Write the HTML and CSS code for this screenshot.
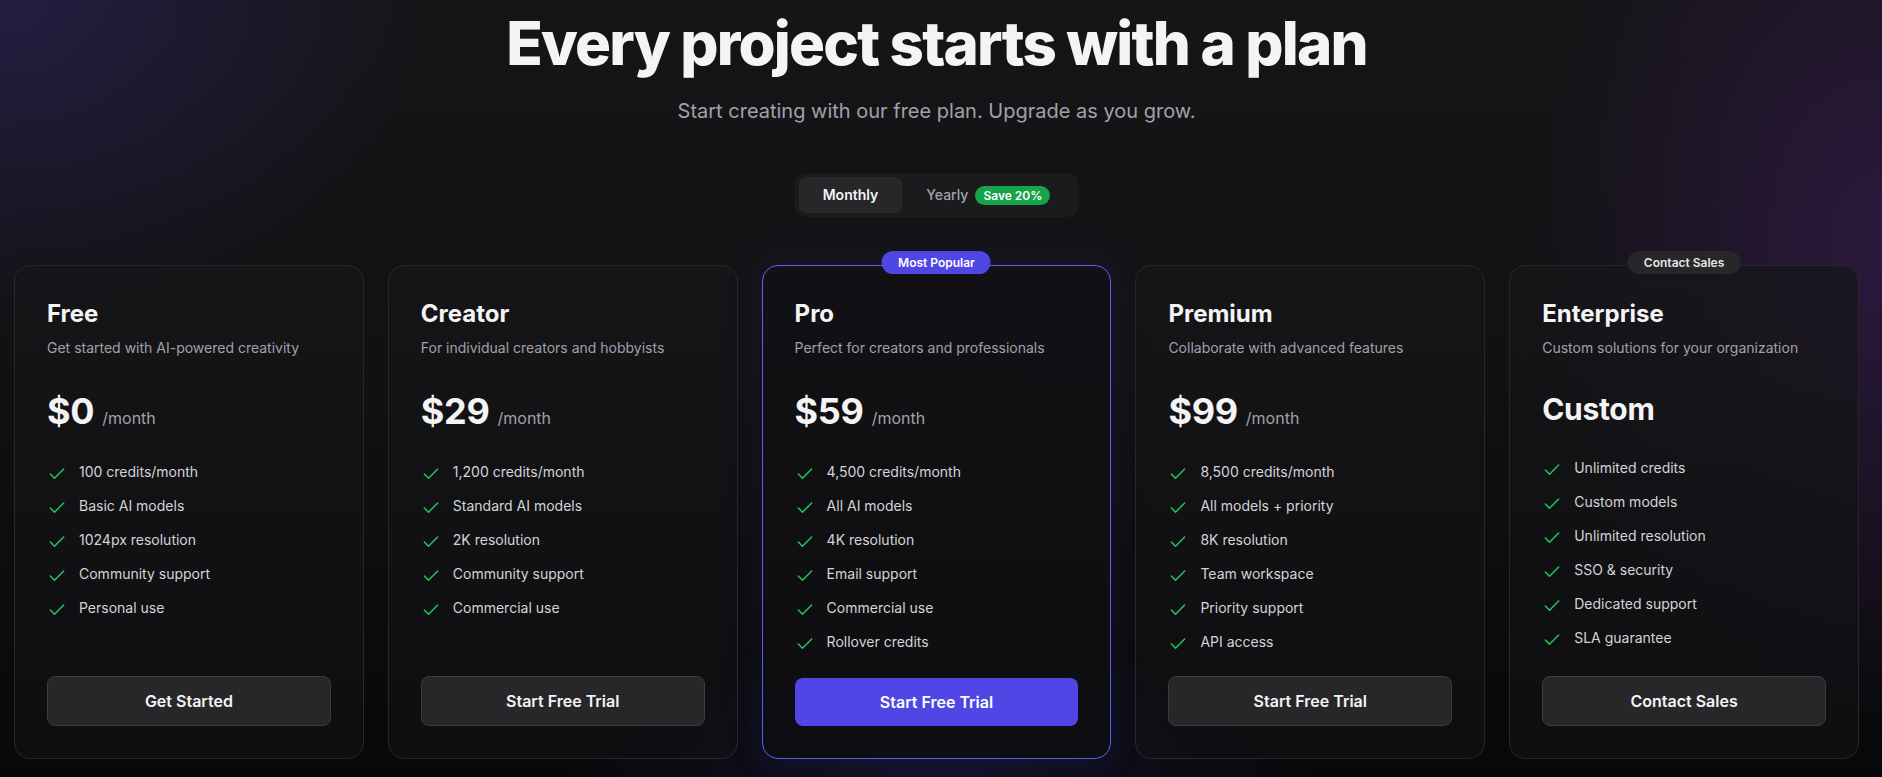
FILE: index.html
```html
<!DOCTYPE html>
<html lang="en">
<head>
<meta charset="utf-8">
<title>Pricing</title>
<link rel="stylesheet" href="styles.css">
</head>
<body>
<div class="page">
  <header class="hero">
    <h1 class="hero-title">Every project starts with a plan</h1>
    <p class="hero-sub">Start creating with our free plan. Upgrade as you grow.</p>
    <div class="toggle">
      <button class="toggle-btn is-active">Monthly</button>
      <button class="toggle-btn">Yearly <span class="save">Save 20%</span></button>
    </div>
  </header>

  <section class="plans">
    <article class="plan">
      <h3 class="plan-name">Free</h3>
      <p class="plan-desc">Get started with AI-powered creativity</p>
      <div class="price"><span class="amount">$0</span><span class="per">/month</span></div>
      <ul class="features">
        <li><svg class="check" viewBox="0 0 24 24"><path d="M20 6 9 17l-5-5"/></svg>100 credits/month</li>
        <li><svg class="check" viewBox="0 0 24 24"><path d="M20 6 9 17l-5-5"/></svg>Basic AI models</li>
        <li><svg class="check" viewBox="0 0 24 24"><path d="M20 6 9 17l-5-5"/></svg>1024px resolution</li>
        <li><svg class="check" viewBox="0 0 24 24"><path d="M20 6 9 17l-5-5"/></svg>Community support</li>
        <li><svg class="check" viewBox="0 0 24 24"><path d="M20 6 9 17l-5-5"/></svg>Personal use</li>
      </ul>
      <button class="plan-btn">Get Started</button>
    </article>

    <article class="plan">
      <h3 class="plan-name">Creator</h3>
      <p class="plan-desc">For individual creators and hobbyists</p>
      <div class="price"><span class="amount">$29</span><span class="per">/month</span></div>
      <ul class="features">
        <li><svg class="check" viewBox="0 0 24 24"><path d="M20 6 9 17l-5-5"/></svg>1,200 credits/month</li>
        <li><svg class="check" viewBox="0 0 24 24"><path d="M20 6 9 17l-5-5"/></svg>Standard AI models</li>
        <li><svg class="check" viewBox="0 0 24 24"><path d="M20 6 9 17l-5-5"/></svg>2K resolution</li>
        <li><svg class="check" viewBox="0 0 24 24"><path d="M20 6 9 17l-5-5"/></svg>Community support</li>
        <li><svg class="check" viewBox="0 0 24 24"><path d="M20 6 9 17l-5-5"/></svg>Commercial use</li>
      </ul>
      <button class="plan-btn">Start Free Trial</button>
    </article>

    <article class="plan plan-popular">
      <span class="ribbon ribbon-primary">Most Popular</span>
      <h3 class="plan-name">Pro</h3>
      <p class="plan-desc">Perfect for creators and professionals</p>
      <div class="price"><span class="amount">$59</span><span class="per">/month</span></div>
      <ul class="features">
        <li><svg class="check" viewBox="0 0 24 24"><path d="M20 6 9 17l-5-5"/></svg>4,500 credits/month</li>
        <li><svg class="check" viewBox="0 0 24 24"><path d="M20 6 9 17l-5-5"/></svg>All AI models</li>
        <li><svg class="check" viewBox="0 0 24 24"><path d="M20 6 9 17l-5-5"/></svg>4K resolution</li>
        <li><svg class="check" viewBox="0 0 24 24"><path d="M20 6 9 17l-5-5"/></svg>Email support</li>
        <li><svg class="check" viewBox="0 0 24 24"><path d="M20 6 9 17l-5-5"/></svg>Commercial use</li>
        <li><svg class="check" viewBox="0 0 24 24"><path d="M20 6 9 17l-5-5"/></svg>Rollover credits</li>
      </ul>
      <button class="plan-btn plan-btn-primary">Start Free Trial</button>
    </article>

    <article class="plan">
      <h3 class="plan-name">Premium</h3>
      <p class="plan-desc">Collaborate with advanced features</p>
      <div class="price"><span class="amount">$99</span><span class="per">/month</span></div>
      <ul class="features">
        <li><svg class="check" viewBox="0 0 24 24"><path d="M20 6 9 17l-5-5"/></svg>8,500 credits/month</li>
        <li><svg class="check" viewBox="0 0 24 24"><path d="M20 6 9 17l-5-5"/></svg>All models + priority</li>
        <li><svg class="check" viewBox="0 0 24 24"><path d="M20 6 9 17l-5-5"/></svg>8K resolution</li>
        <li><svg class="check" viewBox="0 0 24 24"><path d="M20 6 9 17l-5-5"/></svg>Team workspace</li>
        <li><svg class="check" viewBox="0 0 24 24"><path d="M20 6 9 17l-5-5"/></svg>Priority support</li>
        <li><svg class="check" viewBox="0 0 24 24"><path d="M20 6 9 17l-5-5"/></svg>API access</li>
      </ul>
      <button class="plan-btn">Start Free Trial</button>
    </article>

    <article class="plan">
      <span class="ribbon ribbon-muted">Contact Sales</span>
      <h3 class="plan-name">Enterprise</h3>
      <p class="plan-desc">Custom solutions for your organization</p>
      <div class="price"><span class="amount amount-custom">Custom</span></div>
      <ul class="features">
        <li><svg class="check" viewBox="0 0 24 24"><path d="M20 6 9 17l-5-5"/></svg>Unlimited credits</li>
        <li><svg class="check" viewBox="0 0 24 24"><path d="M20 6 9 17l-5-5"/></svg>Custom models</li>
        <li><svg class="check" viewBox="0 0 24 24"><path d="M20 6 9 17l-5-5"/></svg>Unlimited resolution</li>
        <li><svg class="check" viewBox="0 0 24 24"><path d="M20 6 9 17l-5-5"/></svg>SSO &amp; security</li>
        <li><svg class="check" viewBox="0 0 24 24"><path d="M20 6 9 17l-5-5"/></svg>Dedicated support</li>
        <li><svg class="check" viewBox="0 0 24 24"><path d="M20 6 9 17l-5-5"/></svg>SLA guarantee</li>
      </ul>
      <button class="plan-btn">Contact Sales</button>
    </article>
  </section>
</div>
</body>
</html>
```

FILE: styles.css
```css
* { box-sizing: border-box; }

html, body {
  margin: 0;
  padding: 0;
  height: 100%;
}

body {
  font-family: Inter, "Noto Sans", "Liberation Sans", sans-serif;
  color: #f4f4f5;
  background-color: #0b0b0d;
  background-image:
    radial-gradient(ellipse 420px 320px at 0 0, rgba(48, 40, 110, 0.5), rgba(48, 40, 110, 0) 100%),
    radial-gradient(ellipse 340px 480px at 100% 32%, rgba(68, 30, 100, 0.5), rgba(68, 30, 100, 0) 100%),
    radial-gradient(ellipse 380px 140px at 937px 100%, rgba(55, 55, 150, 0.2), rgba(55, 55, 150, 0) 100%),
    linear-gradient(to bottom, #151518 0%, #131316 35%, #0c0c0e 80%, #08080a 100%);
  background-repeat: no-repeat;
  min-height: 777px;
  overflow: hidden;
}

.page {
  padding: 0 9px 0 0;
}

.hero {
  display: flex;
  flex-direction: column;
  align-items: center;
}

.hero-title {
  margin: 13px 0 0;
  font-size: 60px;
  line-height: 60px;
  font-weight: 800;
  letter-spacing: -1.8px;
  color: #f4f4f5;
}

.hero-sub {
  margin: 24px 0 0;
  font-size: 20px;
  line-height: 28px;
  color: #a1a1aa;
}

.toggle {
  margin-top: 48px;
  display: flex;
  padding: 4px;
  background: #1b1b1e;
  border-radius: 10px;
}

.toggle-btn {
  font-family: inherit;
  border: 0;
  background: transparent;
  color: #a1a1aa;
  font-size: 14px;
  line-height: 20px;
  font-weight: 500;
  padding: 8px 24px;
  border-radius: 7px;
  display: flex;
  align-items: center;
  gap: 7px;
  cursor: pointer;
}

.toggle-btn.is-active {
  background: #27272a;
  color: #f4f4f5;
  font-weight: 600;
}

.save {
  background: #16a34a;
  color: #ffffff;
  font-size: 12px;
  line-height: 16px;
  font-weight: 600;
  padding: 2px 8px 1px;
  border-radius: 999px;
}

.plans {
  width: 1845px;
  margin: 48px auto 0;
  display: grid;
  grid-template-columns: repeat(5, 1fr);
  gap: 24px;
}

.plan {
  position: relative;
  display: flex;
  flex-direction: column;
  padding: 32px;
  border: 1px solid #27272b;
  border-radius: 16px;
  background: linear-gradient(to bottom, rgba(22, 22, 25, 0.75), rgba(16, 16, 19, 0.75));
}

.plan-popular {
  border-color: #5b5ef0;
  background: linear-gradient(to bottom, rgba(18, 18, 21, 0.92), rgba(14, 14, 17, 0.92));
  box-shadow: 0 0 40px rgba(79, 70, 229, 0.12);
}

.ribbon {
  position: absolute;
  top: -15px;
  left: 50%;
  transform: translateX(-50%);
  font-size: 12px;
  line-height: 17px;
  font-weight: 600;
  padding: 3px 16px;
  border-radius: 999px;
  white-space: nowrap;
}

.ribbon-primary {
  background: #4f46e5;
  color: #ffffff;
}

.ribbon-muted {
  background: #27272a;
  color: #e4e4e7;
}

.plan-name {
  margin: 0;
  font-size: 24px;
  line-height: 32px;
  font-weight: 700;
  color: #f4f4f5;
}

.plan-desc {
  margin: 8px 0 0;
  font-size: 14px;
  line-height: 20px;
  color: #a1a1aa;
}

.price {
  margin-top: 33px;
  display: flex;
  align-items: baseline;
  gap: 8px;
}

.amount {
  font-size: 36px;
  line-height: 40px;
  font-weight: 700;
  color: #f4f4f5;
  letter-spacing: -0.3px;
}

.amount-custom {
  font-size: 30px;
  line-height: 36px;
}

.per {
  font-size: 16px;
  line-height: 24px;
  color: #a1a1aa;
}

.features {
  list-style: none;
  margin: 31px 0 24px;
  padding: 0;
  display: flex;
  flex-direction: column;
  gap: 14px;
}

.features li {
  display: flex;
  align-items: center;
  gap: 12px;
  font-size: 14px;
  line-height: 20px;
  height: 20px;
  color: #d4d4d8;
}

.check {
  width: 20px;
  height: 20px;
  flex: none;
  fill: none;
  stroke: #22c55e;
  stroke-width: 1.8;
  stroke-linecap: round;
  stroke-linejoin: round;
  transform: translateY(2px);
}

.plan-btn {
  margin-top: auto;
  font-family: inherit;
  font-size: 16px;
  line-height: 20px;
  font-weight: 600;
  color: #f4f4f5;
  background: #27272a;
  border: 1px solid #3a3a40;
  border-radius: 8px;
  padding: 14px 16px;
  cursor: pointer;
}

.plan-btn-primary {
  background: #4f46e5;
  border: 0;
  color: #ffffff;
}
```
